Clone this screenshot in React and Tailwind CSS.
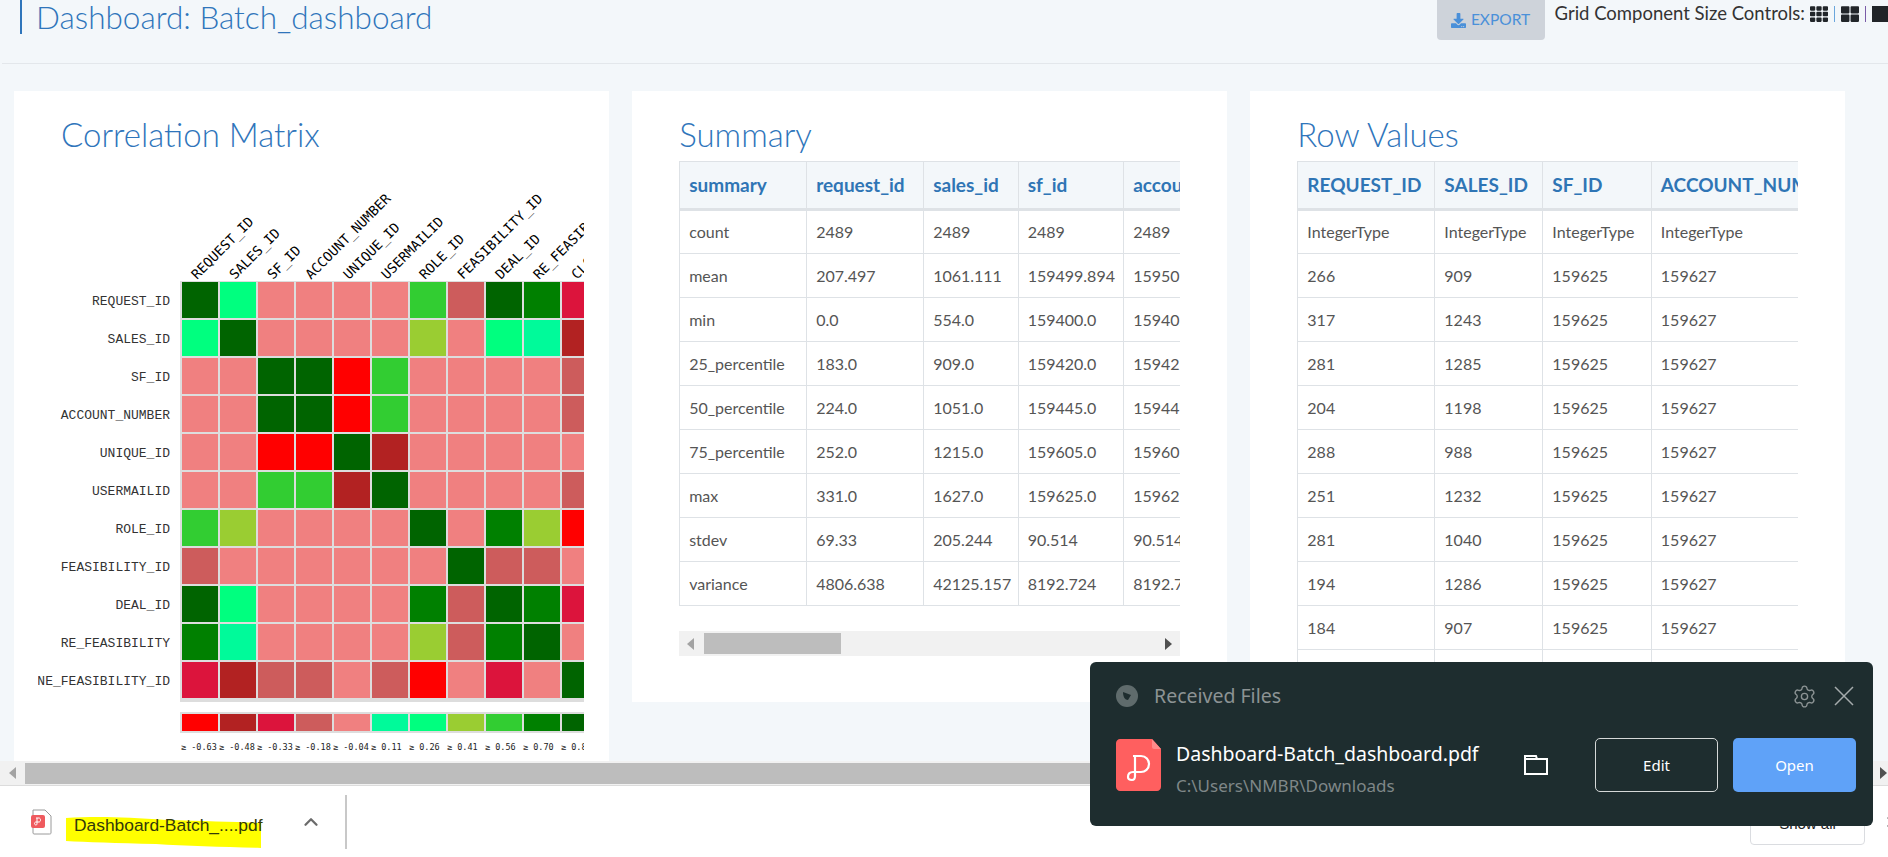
import React from 'react';
import { FaDownload, FaTh, FaThLarge, FaSquareFull } from 'react-icons/fa';
import { ChevronUp, Settings, X } from 'lucide-react';

const COLORS = {
  D: '#006400',
  S: '#00ff7f',
  C: '#f08080',
  L: '#32cd32',
  I: '#cd5c5c',
  G: '#008000',
  R: '#dc143c',
  F: '#b22222',
  Y: '#9acd32',
  X: '#ff0000',
  M: '#00fa9a',
};

const MATRIX = [
  'DSCCCCLIDGR',
  'SDCCCCYCSMF',
  'CCDDXLCCCCI',
  'CCDDXLCCCCI',
  'CCXXDFCCCCC',
  'CCLLFDCCCCI',
  'LYCCCCDCGYX',
  'ICCCCCCDIIC',
  'DSCCCCGIDGR',
  'GMCCCCYIGDC',
  'RFIICIXCRCD',
];

const LEGEND = 'XFRICMSYLGD';
const LEGEND_LABELS = ['-0.63', '-0.48', '-0.33', '-0.18', '-0.04', '0.11', '0.26', '0.41', '0.56', '0.70', '0.85'];

const COLUMNS = [
  'REQUEST_ID',
  'SALES_ID',
  'SF_ID',
  'ACCOUNT_NUMBER',
  'UNIQUE_ID',
  'USERMAILID',
  'ROLE_ID',
  'FEASIBILITY_ID',
  'DEAL_ID',
  'RE_FEASIBILITY',
  'CLONE_FEASIBILITY_ID',
];

const SUMMARY_HEAD = ['summary', 'request_id', 'sales_id', 'sf_id', 'account_number'];
const SUMMARY_WIDTHS = [127, 117, 94.5, 105.5, 180];
const SUMMARY_ROWS = [
  ['count', '2489', '2489', '2489', '2489'],
  ['mean', '207.497', '1061.111', '159499.894', '159501.894'],
  ['min', '0.0', '554.0', '159400.0', '159402.0'],
  ['25_percentile', '183.0', '909.0', '159420.0', '159422.0'],
  ['50_percentile', '224.0', '1051.0', '159445.0', '159447.0'],
  ['75_percentile', '252.0', '1215.0', '159605.0', '159607.0'],
  ['max', '331.0', '1627.0', '159625.0', '159627.0'],
  ['stdev', '69.33', '205.244', '90.514', '90.514'],
  ['variance', '4806.638', '42125.157', '8192.724', '8192.724'],
];

const VALUES_HEAD = ['REQUEST_ID', 'SALES_ID', 'SF_ID', 'ACCOUNT_NUMBER'];
const VALUES_WIDTHS = [137, 108, 108.5, 220];
const VALUES_ROWS = [
  ['IntegerType', 'IntegerType', 'IntegerType', 'IntegerType'],
  ...[
    ['266', '909'],
    ['317', '1243'],
    ['281', '1285'],
    ['204', '1198'],
    ['288', '988'],
    ['251', '1232'],
    ['281', '1040'],
    ['194', '1286'],
    ['184', '907'],
    ['201', '1011'],
    ['233', '1102'],
  ].map((r) => [...r, '159625', '159627']),
];

const Heatmap = () => (
  <svg viewBox="38 161 546 600" className="block w-[546px] h-[600px] ml-[24px]">
    {COLUMNS.map((name, i) => (
      <text
        key={name}
        x={197 + 38 * i}
        y={280}
        transform={`rotate(-45 ${197 + 38 * i} 280)`}
        fontFamily="DejaVu Sans Mono"
        fontSize="13.5"
        fill="#000"
      >
        {name}
      </text>
    ))}
    <rect x="180" y="281" width="420" height="421" fill="#ddd" />
    {MATRIX.map((row, r) => (
      <g key={r}>
        <text x="170" y={305 + 38 * r} textAnchor="end" fontFamily="Liberation Mono" fontSize="13" fill="#333">
          {COLUMNS[r]}
        </text>
        {row.split('').map((c, i) => (
          <rect key={i} x={182 + 38 * i} y={282 + 38 * r} width="36" height="36" fill={COLORS[c]} />
        ))}
      </g>
    ))}
    <rect x="180" y="712" width="420" height="21" fill="#ddd" />
    {LEGEND.split('').map((c, i) => (
      <g key={i}>
        <rect x={182 + 38 * i} y="714" width="36" height="17" fill={COLORS[c]} />
        <text x={181 + 38 * i} y="750" fontFamily="DejaVu Sans Mono" fontSize="8.5" fill="#222">
          ≥ {LEGEND_LABELS[i]}
        </text>
      </g>
    ))}
  </svg>
);

const DataTable = ({ head, rows, widths }) => (
  <div className="w-[501px] overflow-hidden">
    <table
      className="table-fixed border-collapse border-t border-l border-[#dee2e6]"
      style={{ width: widths.reduce((a, b) => a + b, 0) }}
    >
      <colgroup>
        {widths.map((w, i) => (
          <col key={i} style={{ width: w }} />
        ))}
      </colgroup>
      <thead>
        <tr className="h-[48px] bg-[#f3f7fa] border-b-[3px] border-[#dee2e6]">
          {head.map((h) => (
            <th key={h} className="px-[9px] text-left text-[19px] font-bold text-[#2f75b5] whitespace-nowrap border-r border-[#dee2e6]">
              {h}
            </th>
          ))}
        </tr>
      </thead>
      <tbody>
        {rows.map((row, r) => (
          <tr key={r} className="h-[44px] border-b border-[#dee2e6]">
            {row.map((v, i) => (
              <td key={i} className="px-[9px] text-[16px] text-[#555] whitespace-nowrap border-r border-[#dee2e6]">
                {v}
              </td>
            ))}
          </tr>
        ))}
      </tbody>
    </table>
  </div>
);

const Arrow = ({ dir, className }) => (
  <svg viewBox="0 0 8 12" className={className}>
    <path d={dir === 'left' ? 'M7 0V12L0 6Z' : 'M1 0V12L8 6Z'} fill="currentColor" />
  </svg>
);

const Card = ({ title, children, className }) => (
  <section className={`bg-white ${className}`}>
    <h2 className="h-[70px] pt-[24px] pl-[47px] text-[33px] leading-[38px] font-light text-[#2f75bb]">{title}</h2>
    {children}
  </section>
);

const PdfLogo = () => (
  <svg viewBox="0 0 45 52" className="w-[45px] h-[52px] shrink-0">
    <path d="M4 0H36L45 10V48C45 50 43 52 41 52H4C2 52 0 50 0 48V4C0 2 2 0 4 0Z" fill="#ff5f5f" />
    <path d="M36 0L45 10H38C37 10 36 9 36 8Z" fill="#ff8a8a" />
    <path
      d="M17 17H25C30 17 33 21 33 25C33 30 29 33 25 33H17C13 33 12 36 12 38C12 40 14 41 16 41C18 41 19 39 19 37V17"
      fill="none"
      stroke="#fff"
      strokeWidth="2.2"
    />
  </svg>
);

const ReceivedFiles = () => (
  <div className="absolute left-[1090px] top-[662px] w-[783px] h-[164px] rounded-[6px] bg-[#1e2d2f] pl-[26px] font-['Noto_Sans',sans-serif]">
    <div className="flex items-center h-[22px] mt-[23px]">
      <svg viewBox="0 0 22 22" className="w-[22px] h-[22px]">
        <circle cx="11" cy="11" r="11" fill="#5f6b6c" />
        <path d="M7 7L15 10L12 15C9 15 7 12 7 7Z" fill="#1e2d2f" />
      </svg>
      <span className="ml-[16px] text-[19.5px] text-[#8c9394]">Received Files</span>
      <Settings className="ml-auto w-[25px] h-[25px] text-[#8c9394]" strokeWidth={1.3} />
      <svg viewBox="0 0 20 20" className="ml-[17px] mr-[19px] w-[20px] h-[20px]">
        <path d="M1 1L19 19M19 1L1 19" stroke="#a5abac" strokeWidth="1.5" />
      </svg>
    </div>
    <div className="flex items-center h-[54px] mt-[31px] pr-[17px]">
      <PdfLogo />
      <div className="ml-[15px] w-[348px] self-start pt-[3px]">
        <div className="text-[19.5px] leading-[26px] text-white whitespace-nowrap">Dashboard-Batch_dashboard.pdf</div>
        <div className="mt-[8px] text-[17px] leading-[22px] text-[#7f8788] whitespace-nowrap">C:\Users\NMBR\Downloads</div>
      </div>
      <svg viewBox="0 0 24 20" className="w-[24px] h-[20px]">
        <path d="M1 4V1H12L13 4M1 4H23V19H1Z" fill="none" stroke="#fff" strokeWidth="2" />
      </svg>
      <button className="ml-[47px] w-[123px] h-[54px] rounded-[5px] border border-[#d5d8d8] text-[15px] text-white">Edit</button>
      <button className="ml-[15px] w-[123px] h-[54px] rounded-[5px] bg-[#5fa2f8] text-[15px] text-white">Open</button>
    </div>
  </div>
);

const DownloadBar = () => (
  <div className="flex items-center h-[71px] bg-white font-['Liberation_Sans',sans-serif]">
    <svg viewBox="0 0 21 26" className="ml-[31px] w-[21px] h-[26px]">
      <path d="M3 1H14L20 7V24C20 25 19 25 18 25H3C2.500 25 2 24.500 2 24V1Z" fill="#fff" stroke="#9a9a9a" />
      <rect x="0" y="6" width="14" height="13" rx="2" fill="#ef5a5e" />
      <path d="M5 9H8C10 9 10 13 8 13H5C3 13 3 16 5 16C6 16 6 15 6 14V9" fill="none" stroke="#fff" strokeWidth="1" />
    </svg>
    <span className="relative ml-[14px] mt-[20px] w-[195px] h-[32px] pl-[8px] text-[17.400px] leading-[19px] text-[#33390a] whitespace-nowrap">
      <svg viewBox="0 0 195 32" className="absolute left-0 top-0 w-[195px] h-[32px]">
        <path d="M0 2C30 0 60 1 100 4C140 5 170 6 195 7V32C160 31 120 30 90 28C50 27 20 26 0 25Z" fill="#ffff00" />
      </svg>
      <span className="relative">Dashboard-Batch_....pdf</span>
    </span>
    <ChevronUp className="ml-[39px] w-[22px] h-[22px] text-[#6b6b6b]" strokeWidth={2.5} />
    <div className="ml-[23px] w-[2px] h-[54px] bg-[#c8c8c8]" />
    <button className="ml-auto w-[115px] h-[46px] pt-[5px] rounded-[4px] border border-[#dadce0] text-[15px] text-[#222]">Show all</button>
    <X className="ml-[19px] mr-[-12px] w-[16px] h-[16px] shrink-0 text-[#555]" />
  </div>
);

export default function App() {
  return (
    <div className="relative w-[1888px] h-[857px] overflow-hidden flex flex-col bg-white font-['Lato',sans-serif]">
      <main className="h-[761px] overflow-hidden bg-[#f3f7fa]">
        <header className="flex items-start h-[64px] ml-[2px] pl-[18px] border-b border-[#e3e7eb]">
          <h1 className="h-[34px] pl-[14px] border-l-2 border-[#2f75bb] text-[31.500px] leading-[34px] font-light text-[#2f75bb]">
            Dashboard: Batch_dashboard
          </h1>
          <button className="ml-auto flex items-center justify-center gap-[5px] w-[108px] h-[40px] rounded-b-[4px] bg-[#ced3da] text-[15.500px] text-[#4a90d9]">
            <FaDownload className="w-[15px] h-[15px]" />
            EXPORT
          </button>
          <div className="flex items-center ml-[10px] h-[28px] text-[18.500px] text-[#333] whitespace-nowrap">
            Grid Component Size Controls:
            <FaTh className="ml-[5px] w-[18px] h-[18px] text-[#212529]" />
            <span className="ml-[6px] w-px h-[16px] bg-[#6aa6dc]" />
            <FaThLarge className="ml-[6px] w-[18px] h-[18px] text-[#212529]" />
            <span className="ml-[6px] w-px h-[16px] bg-[#7a5ca8]" />
            <FaSquareFull className="ml-[6px] w-[16px] h-[16px] text-[#212529]" />
          </div>
        </header>

        <div className="grid grid-cols-3 items-start gap-[23.5px] w-[1831px] ml-[14px] mt-[27px]">
          <Card title="Correlation Matrix">
            <Heatmap />
          </Card>
          <Card title="Summary" className="h-[611px]">
            <div className="ml-[47px]">
              <DataTable head={SUMMARY_HEAD} rows={SUMMARY_ROWS} widths={SUMMARY_WIDTHS} />
              <div className="flex items-center justify-between w-[501px] h-[25px] mt-[25px] bg-[#f1f1f1]">
                <Arrow dir="left" className="ml-[8px] w-[8px] h-[12px] text-[#a3a3a3]" />
                <div className="absolute ml-[25px] w-[137px] h-[21px] bg-[#bdbdbd]" />
                <Arrow dir="right" className="mr-[8px] w-[8px] h-[12px] text-[#505050]" />
              </div>
            </div>
          </Card>
          <Card title="Row Values" className="h-[700px]">
            <div className="ml-[47px]">
              <DataTable head={VALUES_HEAD} rows={VALUES_ROWS} widths={VALUES_WIDTHS} />
            </div>
          </Card>
        </div>
      </main>

      <div className="flex items-center h-[25px] bg-[#f1f1f1] border-b border-[#dcdcdc]">
        <Arrow dir="left" className="ml-[9px] mr-[8px] w-[8px] h-[12px] text-[#a3a3a3]" />
        <div className="w-[1843px] h-[21px] bg-[#bdbdbd]" />
        <Arrow dir="right" className="ml-[11px] w-[8px] h-[12px] text-[#505050]" />
      </div>

      <DownloadBar />
      <ReceivedFiles />
    </div>
  );
}
